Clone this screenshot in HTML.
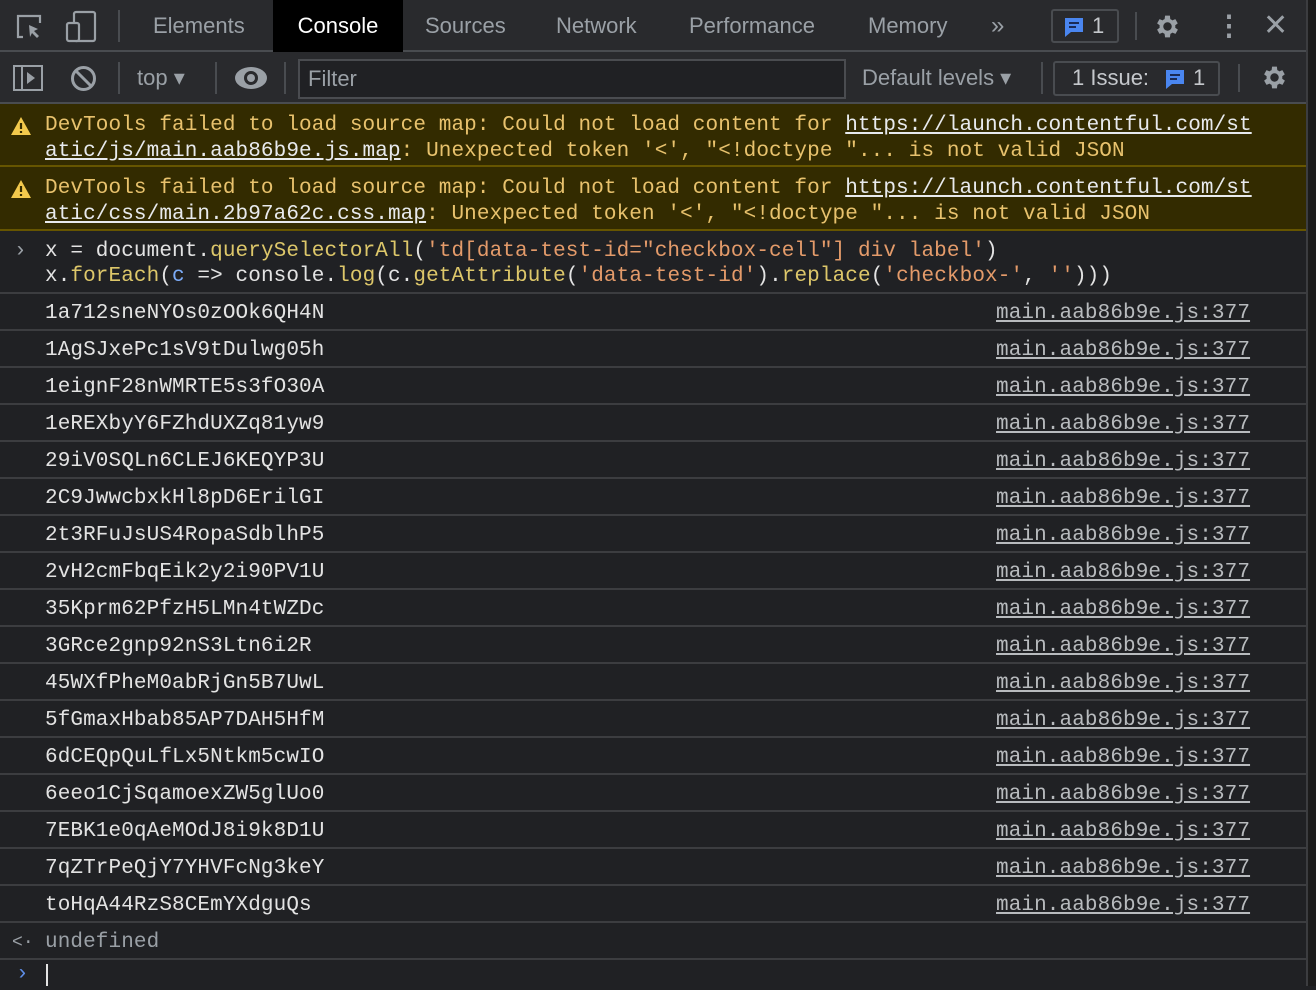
<!DOCTYPE html>
<html><head><meta charset="utf-8"><style>
*{margin:0;padding:0;box-sizing:border-box}
body{width:1316px;height:986px;background:#202124;overflow:hidden;position:relative;font-family:"Liberation Sans",sans-serif;color:#9aa0a6}
.abs{position:absolute}
.tabs{left:0;top:0;width:1306px;height:52px;background:#292a2d;border-bottom:2px solid #494c50}
.tab{position:absolute;top:0;height:50px;line-height:52px;font-size:22px;color:#9aa0a6}
.tb{left:0;top:52px;width:1306px;height:52px;background:#292a2d;border-bottom:2px solid #494c50}
.sep{position:absolute;width:2px;background:#494c50}
.mono{font-family:"Liberation Mono",monospace;font-size:21px;letter-spacing:0.1px}
.warn{left:0;width:1306px;background:#332b00;border-bottom:2px solid #665500;color:#e8c26d;padding:9px 0 0 45px;line-height:26px;white-space:pre}
.warn a{color:#e8eaed;text-decoration:underline}
.row{position:absolute;left:0;width:1306px;border-bottom:2px solid #3c3d40;height:37px;line-height:40px;color:#e3e3e3;padding-left:45px;white-space:pre}
.src{position:absolute;left:996px;top:0;color:#b8bbbe;text-decoration:underline}
.fn{color:#ddc76a}.str{color:#e49b6a}.var{color:#7cacf8}
.right{left:1306px;top:0;width:10px;height:986px;background:#1c1c1c;border-left:2px solid #3c3d40}
</style></head><body>
<div class="abs tabs">
 <svg class="abs" style="left:14px;top:12px" width="30" height="30" viewBox="0 0 30 30" fill="none" stroke="#9aa0a6" stroke-width="2.2"><path d="M9 25H4V4h22v7"/><path d="M15 13l9 4-4 2 5 5-2 2-5-5-2 4z" fill="#9aa0a6" stroke="none"/></svg>
 <svg class="abs" style="left:64px;top:10px" width="34" height="34" viewBox="0 0 34 34" fill="none" stroke="#9aa0a6" stroke-width="2.2"><rect x="10" y="2" width="21" height="29" rx="2"/><rect x="3" y="13" width="12" height="18" rx="2" fill="#292a2d"/></svg>
 <div class="sep" style="left:118px;top:10px;height:32px"></div>
 <div class="tab" style="left:153px">Elements</div>
 <div class="tab" style="left:273px;width:130px;background:#000;color:#fff;text-align:center;height:52px">Console</div>
 <div class="tab" style="left:425px">Sources</div>
 <div class="tab" style="left:556px">Network</div>
 <div class="tab" style="left:689px">Performance</div>
 <div class="tab" style="left:868px">Memory</div>
 <div class="tab" style="left:991px;font-size:24px">»</div>
 <div class="abs" style="left:1051px;top:9px;width:68px;height:34px;border:2px solid #494c50;border-radius:3px"></div>
 <svg class="abs" style="left:1062px;top:15px" width="24" height="24" viewBox="0 0 24 24"><path d="M3 3h18v14H9l-6 5z" fill="#4a86f0"/><path d="M7 8h10M7 12h7" stroke="#1a2a55" stroke-width="2"/></svg>
 <div class="tab" style="left:1092px;color:#c5c8cc">1</div>
 <div class="sep" style="left:1135px;top:12px;height:28px"></div>
 <svg class="abs" style="left:1153px;top:12px" width="29" height="29" viewBox="0 0 24 24"><path fill="#9aa0a6" d="M19.4 13a7.6 7.6 0 000-2l2.1-1.6-2-3.5-2.5 1a7.4 7.4 0 00-1.7-1L15 3h-4l-.4 2.9a7.4 7.4 0 00-1.7 1l-2.5-1-2 3.5L6.5 11a7.6 7.6 0 000 2l-2.1 1.6 2 3.5 2.5-1a7.4 7.4 0 001.7 1L11 21h4l.4-2.9a7.4 7.4 0 001.7-1l2.5 1 2-3.5zM13 15.5a3.5 3.5 0 110-7 3.5 3.5 0 010 7z" transform="translate(-1 0)"/></svg>
 <div class="tab" style="left:1215px;font-size:28px;font-weight:bold">⋮</div>
 <div class="tab" style="left:1263px;font-size:30px">✕</div>
</div>
<div class="abs tb">
 <svg class="abs" style="left:13px;top:13px" width="30" height="26" viewBox="0 0 30 26" fill="none" stroke="#9aa0a6" stroke-width="2"><rect x="1" y="1" width="28" height="24"/><path d="M9 1v24"/><path d="M14 7l8 6-8 6z" fill="#9aa0a6" stroke="none"/></svg>
 <svg class="abs" style="left:70px;top:13px" width="27" height="27" viewBox="0 0 27 27" fill="none" stroke="#9aa0a6" stroke-width="3"><circle cx="13.5" cy="13.5" r="11"/><path d="M6 6l15 15"/></svg>
 <div class="sep" style="left:118px;top:10px;height:32px"></div>
 <div class="tab" style="left:137px;top:0;line-height:52px">top ▾</div>
 <div class="sep" style="left:215px;top:10px;height:32px"></div>
 <svg class="abs" style="left:234px;top:14px" width="34" height="24" viewBox="0 0 34 24"><ellipse cx="17" cy="12" rx="16" ry="11" fill="#9aa0a6"/><circle cx="17" cy="12" r="7" fill="#292a2d"/><circle cx="17" cy="12" r="4" fill="#9aa0a6"/></svg>
 <div class="sep" style="left:284px;top:10px;height:32px"></div>
 <div class="abs" style="left:298px;top:7px;width:548px;height:40px;border:2px solid #4a4c50;background:#202124;font-size:22px;line-height:36px;padding-left:8px;color:#9aa0a6">Filter</div>
 <div class="tab" style="left:862px">Default levels ▾</div>
 <div class="sep" style="left:1041px;top:10px;height:32px"></div>
 <div class="abs" style="left:1053px;top:9px;width:167px;height:35px;border:2px solid #494c50;border-radius:3px"></div>
 <div class="tab" style="left:1072px;color:#c5c8cc">1 Issue:</div>
 <svg class="abs" style="left:1163px;top:15px" width="24" height="24" viewBox="0 0 24 24"><path d="M3 3h18v14H9l-6 5z" fill="#4a86f0"/><path d="M7 8h10M7 12h7" stroke="#1a2a55" stroke-width="2"/></svg>
 <div class="tab" style="left:1193px;color:#c5c8cc">1</div>
 <div class="sep" style="left:1238px;top:12px;height:28px"></div>
 <svg class="abs" style="left:1260px;top:11px" width="29" height="29" viewBox="0 0 24 24"><path fill="#9aa0a6" d="M19.4 13a7.6 7.6 0 000-2l2.1-1.6-2-3.5-2.5 1a7.4 7.4 0 00-1.7-1L15 3h-4l-.4 2.9a7.4 7.4 0 00-1.7 1l-2.5-1-2 3.5L6.5 11a7.6 7.6 0 000 2l-2.1 1.6 2 3.5 2.5-1a7.4 7.4 0 001.7 1L11 21h4l.4-2.9a7.4 7.4 0 001.7-1l2.5 1 2-3.5zM13 15.5a3.5 3.5 0 110-7 3.5 3.5 0 010 7z" transform="translate(-1 0)"/></svg>
</div>
<div class="abs warn mono" style="top:104px;height:63px"><svg class="abs" style="left:10px;top:12px" width="22" height="20" viewBox="0 0 22 20"><path d="M11 1L21 19H1z" fill="#f2c94c"/><path d="M11 7v6M11 15v2" stroke="#332b00" stroke-width="2.2"/></svg>DevTools failed to load source map: Could not load content for <a>https://launch.contentful.com/st</a>
<a>atic/js/main.aab86b9e.js.map</a>: Unexpected token '&lt;', "&lt;!doctype "... is not valid JSON</div>
<div class="abs warn mono" style="top:167px;height:64px"><svg class="abs" style="left:10px;top:12px" width="22" height="20" viewBox="0 0 22 20"><path d="M11 1L21 19H1z" fill="#f2c94c"/><path d="M11 7v6M11 15v2" stroke="#332b00" stroke-width="2.2"/></svg>DevTools failed to load source map: Could not load content for <a>https://launch.contentful.com/st</a>
<a>atic/css/main.2b97a62c.css.map</a>: Unexpected token '&lt;', "&lt;!doctype "... is not valid JSON</div>
<div class="abs mono" style="left:0;top:231px;width:1306px;height:63px;border-bottom:2px solid #3c3d40;padding:8px 0 0 45px;line-height:25px;color:#e3e3e3;white-space:pre"><span class="abs" style="left:14px;top:8px;color:#9aa0a6">›</span>x = document.<span class="fn">querySelectorAll</span>(<span class="str">'td[data-test-id="checkbox-cell"] div label'</span>)
x.<span class="fn">forEach</span>(<span class="var">c</span> =&gt; console.<span class="fn">log</span>(c.<span class="fn">getAttribute</span>(<span class="str">'data-test-id'</span>).<span class="fn">replace</span>(<span class="str">'checkbox-'</span>, <span class="str">''</span>)))</div>
<div class="row mono" style="top:294px">1a712sneNYOs0zOOk6QH4N<span class="src">main.aab86b9e.js:377</span></div>
<div class="row mono" style="top:331px">1AgSJxePc1sV9tDulwg05h<span class="src">main.aab86b9e.js:377</span></div>
<div class="row mono" style="top:368px">1eignF28nWMRTE5s3fO30A<span class="src">main.aab86b9e.js:377</span></div>
<div class="row mono" style="top:405px">1eREXbyY6FZhdUXZq81yw9<span class="src">main.aab86b9e.js:377</span></div>
<div class="row mono" style="top:442px">29iV0SQLn6CLEJ6KEQYP3U<span class="src">main.aab86b9e.js:377</span></div>
<div class="row mono" style="top:479px">2C9JwwcbxkHl8pD6ErilGI<span class="src">main.aab86b9e.js:377</span></div>
<div class="row mono" style="top:516px">2t3RFuJsUS4RopaSdblhP5<span class="src">main.aab86b9e.js:377</span></div>
<div class="row mono" style="top:553px">2vH2cmFbqEik2y2i90PV1U<span class="src">main.aab86b9e.js:377</span></div>
<div class="row mono" style="top:590px">35Kprm62PfzH5LMn4tWZDc<span class="src">main.aab86b9e.js:377</span></div>
<div class="row mono" style="top:627px">3GRce2gnp92nS3Ltn6i2R<span class="src">main.aab86b9e.js:377</span></div>
<div class="row mono" style="top:664px">45WXfPheM0abRjGn5B7UwL<span class="src">main.aab86b9e.js:377</span></div>
<div class="row mono" style="top:701px">5fGmaxHbab85AP7DAH5HfM<span class="src">main.aab86b9e.js:377</span></div>
<div class="row mono" style="top:738px">6dCEQpQuLfLx5Ntkm5cwIO<span class="src">main.aab86b9e.js:377</span></div>
<div class="row mono" style="top:775px">6eeo1CjSqamoexZW5glUo0<span class="src">main.aab86b9e.js:377</span></div>
<div class="row mono" style="top:812px">7EBK1e0qAeMOdJ8i9k8D1U<span class="src">main.aab86b9e.js:377</span></div>
<div class="row mono" style="top:849px">7qZTrPeQjY7YHVFcNg3keY<span class="src">main.aab86b9e.js:377</span></div>
<div class="row mono" style="top:886px">toHqA44RzS8CEmYXdguQs<span class="src">main.aab86b9e.js:377</span></div>
<div class="row mono" style="top:923px;color:#9aa0a6"><span class="abs" style="left:12px;top:0;font-size:18px">&lt;·</span>undefined</div>
<div class="abs mono" style="left:16px;top:960px;color:#5e8ee8;line-height:30px">›</div>
<div class="abs" style="left:46px;top:964px;width:2px;height:22px;background:#e3e3e3"></div>
<div class="abs right"></div>
</body></html>
